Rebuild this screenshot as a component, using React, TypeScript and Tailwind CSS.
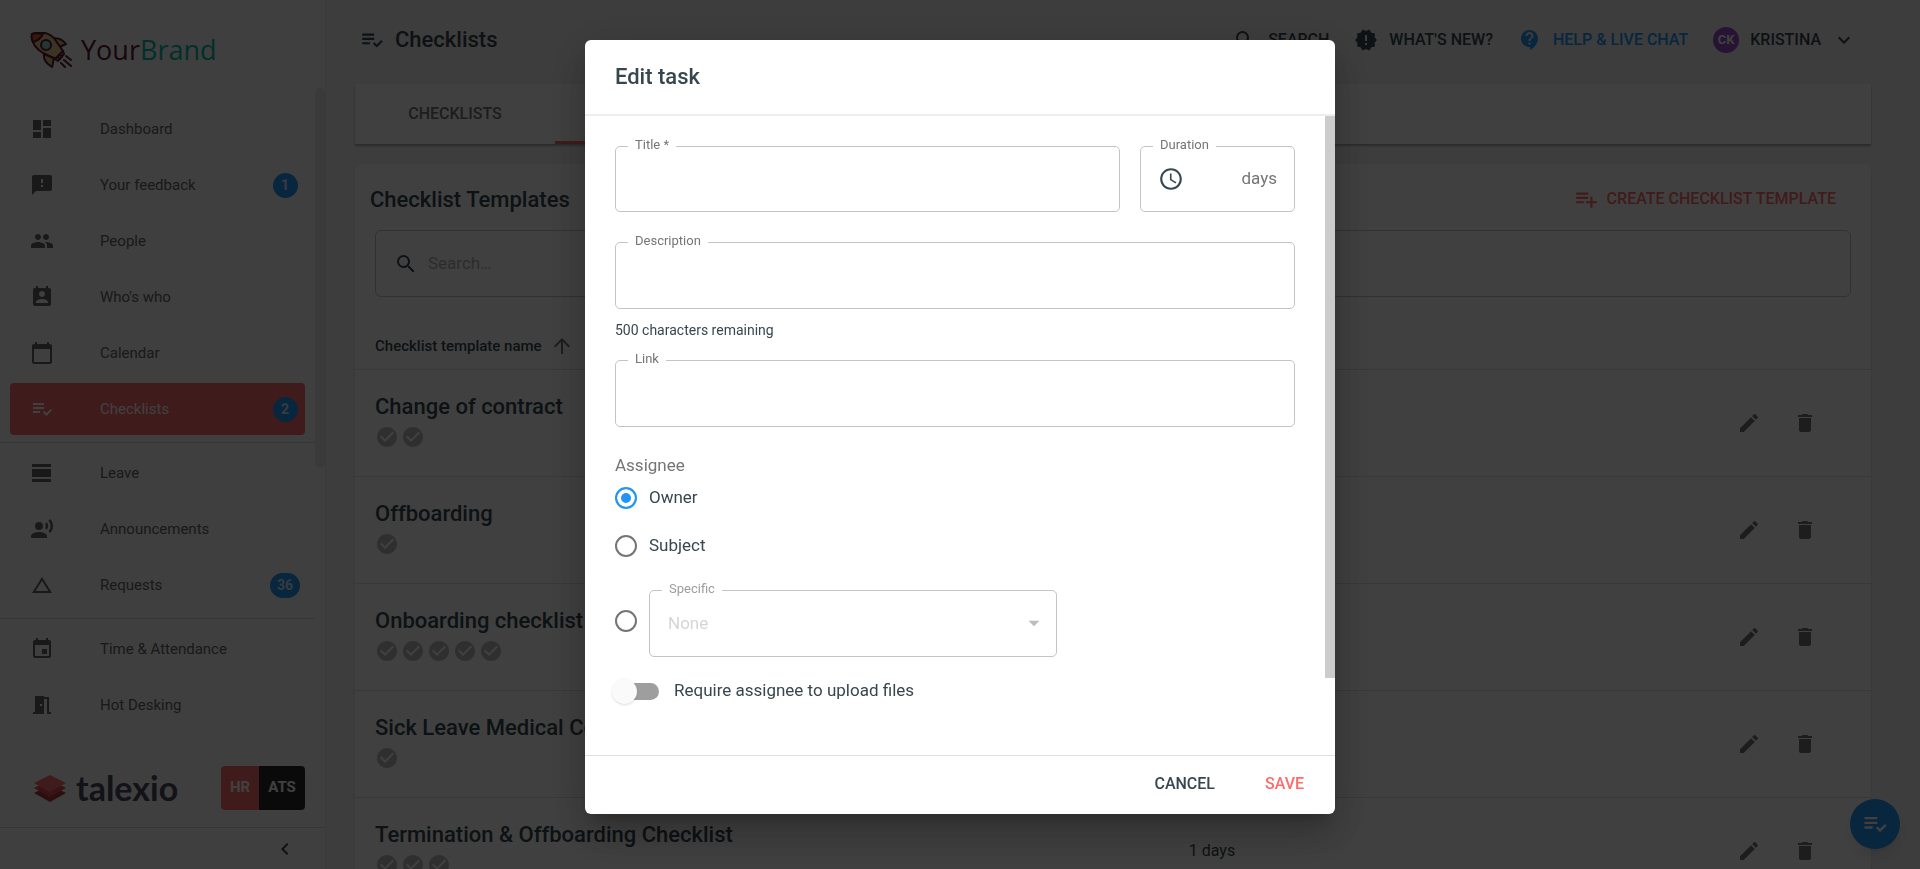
import React, { useState } from 'react';
import clsx from 'clsx';
import type { IconType } from 'react-icons';
import {
  MdAccessTime,
  MdArrowUpward,
  MdArrowDropDown,
  MdCalendarToday,
  MdChangeHistory,
  MdCheckCircle,
  MdContactSupport,
  MdDashboard,
  MdDelete,
  MdEdit,
  MdEvent,
  MdExpandMore,
  MdFeedback,
  MdKeyboardArrowLeft,
  MdMeetingRoom,
  MdNewReleases,
  MdPeople,
  MdPermContactCalendar,
  MdPlaylistAdd,
  MdPlaylistAddCheck,
  MdRecordVoiceOver,
  MdSearch,
  MdViewDay,
} from 'react-icons/md';

interface NavItem {
  label: string;
  icon: IconType;
  badge?: number;
  active?: boolean;
}

const navGroups: NavItem[][] = [
  [
    { label: 'Dashboard', icon: MdDashboard },
    { label: 'Your feedback', icon: MdFeedback, badge: 1 },
    { label: 'People', icon: MdPeople },
    { label: "Who's who", icon: MdPermContactCalendar },
    { label: 'Calendar', icon: MdCalendarToday },
    { label: 'Checklists', icon: MdPlaylistAddCheck, badge: 2, active: true },
  ],
  [
    { label: 'Leave', icon: MdViewDay },
    { label: 'Announcements', icon: MdRecordVoiceOver },
    { label: 'Requests', icon: MdChangeHistory, badge: 36 },
  ],
  [
    { label: 'Time & Attendance', icon: MdEvent },
    { label: 'Hot Desking', icon: MdMeetingRoom },
  ],
];

const templates = [
  { name: 'Change of contract', tasks: 2, duration: '' },
  { name: 'Offboarding', tasks: 1, duration: '' },
  { name: 'Onboarding checklist', tasks: 5, duration: '' },
  { name: 'Sick Leave Medical Certificate', tasks: 1, duration: '' },
  { name: 'Termination & Offboarding Checklist', tasks: 3, duration: '1 days' },
];

const BrandLogo: React.FC = () => (
  <div className="flex items-center gap-[7px]">
    <svg width="44" height="36" viewBox="0 0 44 36" fill="none" stroke="#5c1a33" strokeWidth="2" strokeLinejoin="round" strokeLinecap="round">
      <path d="M21 7c6-2 11 0 15 5l-9 4z" fill="#e3bd80" />
      <path d="M14 22c-1 6 3 10 8 13l2-9z" fill="#e3bd80" />
      <path d="M2 2c9-3 17-1 22 4l9 13-7 8-13-6C5 16 1 9 2 2z" fill="#ecca8c" />
      <path d="M2 2c4-1 7-1 11 0-2 4-6 7-10 8C2 8 1 5 2 2z" fill="#e0601a" />
      <circle cx="16" cy="13" r="5" fill="#8fd3cf" />
      <path d="M33 19l1 3-6 7-3-2zM30 22l2 3M28 25l2 2" fill="#e3bd80" />
      <path d="M36 24l5 4M34 28l7 6M31 31l4 4" />
    </svg>
    <span className="font-['Open_Sans'] text-[27px] leading-9 text-[#5c1a33]">
      Your<span className="text-[#00bfa5]">Brand</span>
    </span>
  </div>
);

const TalexioLogo: React.FC = () => (
  <div className="flex items-center gap-2.5">
    <svg width="32" height="28" viewBox="0 0 32 28">
      <path d="M16 11l16 8-16 9-16-9z" fill="#b03a3f" />
      <path d="M16 6l16 8-16 9-16-9z" fill="#d84e50" />
      <path d="M16 1l16 8-16 9L0 9z" fill="#ff6b6b" />
    </svg>
    <span className="font-[Lato] text-[34px] leading-9 font-bold text-[#474a5e]">talexio</span>
  </div>
);

const Sidebar: React.FC = () => (
  <aside className="flex w-[326px] shrink-0 flex-col border-r border-[#e6e6e6] bg-[#fafafa]">
    <div className="h-[88px] px-[30px] pt-8">
      <BrandLogo />
    </div>
    <div className="flex flex-1">
      <nav className="flex-1 pt-[15px]">
        {navGroups.map((group, i) => (
          <ul key={group[0].label} className={clsx('space-y-1 px-[10px]', i > 0 && 'mt-[7px] border-t border-[#d5d5d5] pt-1')}>
            {group.map(({ label, icon: Icon, badge, active }) => (
              <li key={label}>
                <a
                  href="#"
                  className={clsx(
                    'flex h-[52px] items-center rounded pl-5',
                    active ? 'bg-[#ff6b6b] text-white' : 'text-[#666]'
                  )}
                >
                  <Icon size={24} />
                  <span className="ml-[46px] flex-1 text-[15px]">{label}</span>
                  {badge && (
                    <span className="flex w-10 justify-center">
                      <span className="flex h-[25px] min-w-[25px] items-center justify-center rounded-full bg-[#2196f3] px-[7px] text-sm font-bold text-white/80">
                        {badge}
                      </span>
                    </span>
                  )}
                </a>
              </li>
            ))}
          </ul>
        ))}
      </nav>
      <div className="h-[380px] w-[10px] rounded-full bg-[#e6e6e6]" />
    </div>
    <div className="flex h-[77px] items-center justify-between pr-5 pb-0.5 pl-[34px]">
      <TalexioLogo />
      <div className="flex h-11 overflow-hidden rounded text-[15px] font-bold">
        <button type="button" className="w-[38px] bg-[#ff6b6b] text-white">HR</button>
        <button type="button" className="w-[46px] bg-[#2b2b2b] text-white">ATS</button>
      </div>
    </div>
    <div className="flex h-[42px] items-center justify-end border-t border-[#d5d5d5] pr-7">
      <button type="button" aria-label="Collapse menu" className="text-[#37474f]">
        <MdKeyboardArrowLeft size={24} />
      </button>
    </div>
  </aside>
);

const TopBar: React.FC = () => (
  <header className="flex h-[84px] shrink-0 items-center justify-between pr-[15px] pb-[5px] pl-1 font-medium">
    <h1 className="flex items-center gap-[10px] text-[22px]">
      <MdPlaylistAddCheck size={26} />
      Checklists
    </h1>
    <div className="flex items-center gap-[25px]">
      <button type="button" className="flex items-center gap-[11px]">
        <MdSearch size={24} />
        SEARCH
      </button>
      <button type="button" className="flex items-center gap-[11px]">
        <MdNewReleases size={24} />
        WHAT'S NEW?
      </button>
      <button type="button" className="flex items-center gap-[11px] text-[#2196f3]">
        <MdContactSupport size={24} />
        HELP &amp; LIVE CHAT
      </button>
      <button type="button" className="flex items-center gap-[11px]">
        <span className="flex size-[26px] items-center justify-center rounded-full bg-[#9c4dcc] text-[13px] font-bold text-white">
          CK
        </span>
        KRISTINA
        <MdExpandMore size={24} />
      </button>
    </div>
  </header>
);

const TemplatesCard: React.FC = () => (
  <section className="mt-5 flex-1 rounded-t-md bg-white shadow">
    <div className="flex h-[66px] items-center justify-between pt-1 pr-[35px] pl-[15px]">
      <h2 className="text-[22px] font-medium">Checklist Templates</h2>
      <button type="button" className="flex items-center gap-2 font-medium text-[#ff6b6b]">
        <MdPlaylistAdd size={26} />
        CREATE CHECKLIST TEMPLATE
      </button>
    </div>
    <div className="mx-5 flex h-[67px] items-center gap-[10px] rounded-md border border-[#c4c4c4] px-[18px]">
      <MdSearch size={24} />
      <input
        type="search"
        aria-label="Search templates"
        placeholder="Search…"
        className="flex-1 bg-transparent text-[17px] outline-none placeholder:text-[#b0b0b0]"
      />
    </div>
    <table className="mt-[27px] w-full text-left">
      <thead>
        <tr className="h-[45px] border-b border-[#e0e0e0] text-[15px]">
          <th className="w-[55%] pl-5 font-medium">
            <span className="flex items-center gap-2">
              Checklist template name
              <MdArrowUpward size={24} className="text-[#757575]" />
            </span>
          </th>
          <th />
          <th />
        </tr>
      </thead>
      <tbody>
        {templates.map((template) => (
          <tr key={template.name} className="h-[107px] border-b border-[#e0e0e0]">
            <td className="pb-1 pl-5">
              <h3 className="text-[22px] leading-7 font-medium">{template.name}</h3>
              <div className="mt-1 flex gap-0.5 text-[#bdbdbd]">
                {Array.from({ length: template.tasks }, (_, i) => (
                  <MdCheckCircle key={i} size={24} />
                ))}
              </div>
            </td>
            <td>{template.duration}</td>
            <td className="pr-[54px]">
              <div className="flex justify-end gap-8 text-[#757575]">
                <button type="button" aria-label={`Edit ${template.name}`}>
                  <MdEdit size={24} />
                </button>
                <button type="button" aria-label={`Delete ${template.name}`}>
                  <MdDelete size={24} />
                </button>
              </div>
            </td>
          </tr>
        ))}
      </tbody>
    </table>
  </section>
);

interface OutlinedProps {
  id: string;
  label: string;
  disabled?: boolean;
  className?: string;
  children: React.ReactNode;
}

const Outlined: React.FC<OutlinedProps> = ({ id, label, disabled, className, children }) => (
  <fieldset className={clsx('min-w-0 rounded-[5px] border border-[#c4c4c4]', className)}>
    <legend className={clsx('ml-3 h-3 px-[7px] text-[13px] leading-[10px]', disabled ? 'text-[#9e9e9e]' : 'text-[#757575]')}>
      <label htmlFor={id}>{label}</label>
    </legend>
    <div className="flex h-[54px] items-center px-[17px]">{children}</div>
  </fieldset>
);

const radioStyle =
  'size-[22px] shrink-0 appearance-none rounded-full border-2 border-[#757575] checked:border-[#2196f3] checked:bg-[#2196f3] checked:shadow-[inset_0_0_0_4px_#fff]';

const inputStyle = 'h-full w-full min-w-0 bg-transparent text-[17px] outline-none';

const EditTaskDialog: React.FC = () => {
  const [assignee, setAssignee] = useState('owner');
  const [upload, setUpload] = useState(false);

  return (
    <div className="fixed inset-0 flex items-start justify-center bg-black/75 pt-10">
      <div
        role="dialog"
        aria-labelledby="dialog-title"
        className="w-[750px] max-w-full rounded-md bg-white shadow-[0_11px_15px_-7px_rgba(0,0,0,0.2),0_24px_38px_3px_rgba(0,0,0,0.14),0_9px_46px_8px_rgba(0,0,0,0.12)]"
      >
        <h2 id="dialog-title" className="flex h-[76px] items-center border-b-2 border-[#eee] px-[30px] pb-0.5 text-[22px] font-medium">
          Edit task
        </h2>
        <div className="flex">
          <form className="flex-1 pt-6 pr-[30px] pb-[45px] pl-[30px] text-[17px]">
            <div className="flex gap-5">
              <Outlined id="title" label="Title *" className="h-[72px] flex-1">
                <input id="title" type="text" required className={inputStyle} />
              </Outlined>
              <Outlined id="duration" label="Duration" className="h-[72px] w-[155px]">
                <MdAccessTime size={26} className="shrink-0" />
                <input id="duration" type="text" className={inputStyle} />
                <span className="text-[#757575]">days</span>
              </Outlined>
            </div>
            <Outlined id="description" label="Description" className="mt-6 h-[73px]">
              <input id="description" type="text" maxLength={500} className={inputStyle} />
            </Outlined>
            <p className="mt-[11px] text-sm leading-5">500 characters remaining</p>
            <Outlined id="link" label="Link" className="mt-[14px] h-[73px]">
              <input id="link" type="text" className={inputStyle} />
            </Outlined>
            <p className="mt-[30px] mb-px leading-4 text-[#757575]">Assignee</p>
            <label className="flex h-12 items-center gap-3">
              <input type="radio" name="assignee" className={radioStyle} checked={assignee === 'owner'} onChange={() => setAssignee('owner')} />
              Owner
            </label>
            <label className="flex h-12 items-center gap-3">
              <input type="radio" name="assignee" className={radioStyle} checked={assignee === 'subject'} onChange={() => setAssignee('subject')} />
              Subject
            </label>
            <div className="mt-[14px] flex items-center gap-3">
              <input
                type="radio"
                name="assignee"
                aria-label="Specific"
                className={radioStyle}
                checked={assignee === 'specific'}
                onChange={() => setAssignee('specific')}
              />
              <Outlined id="specific" label="Specific" disabled className="h-[73px] w-[408px]">
                <select id="specific" disabled={assignee !== 'specific'} className="flex-1 appearance-none bg-transparent px-px pt-0.5 text-[#d5d5d5]">
                  <option>None</option>
                </select>
                <MdArrowDropDown size={26} className="-mr-2 text-[#bdbdbd]" />
              </Outlined>
            </div>
            <label className="mt-[14px] mb-[-1px] flex h-10 items-center gap-[15px]">
              <input
                type="checkbox"
                checked={upload}
                onChange={(e) => setUpload(e.target.checked)}
                className="flex h-[17px] w-11 appearance-none items-center rounded-full bg-[#9e9e9e] before:-ml-[3px] before:size-[25px] before:rounded-full before:bg-[#fafafa] before:shadow checked:justify-end"
              />
              Require assignee to upload files
            </label>
          </form>
          <div className="w-[10px]">
            <div className="h-[88%] bg-[#ccc]" />
          </div>
        </div>
        <div className="flex h-[59px] items-center justify-end gap-[50px] border-t border-[#e0e0e0] px-[31px] pb-0.5 font-medium">
          <button type="button">CANCEL</button>
          <button type="button" className="text-[#ff6b6b]">SAVE</button>
        </div>
      </div>
    </div>
  );
};

const App: React.FC = () => (
  <div className="font-[Roboto,sans-serif] text-base text-[#37474f]">
    <div className="flex h-screen overflow-hidden bg-[#f2f2f2]">
      <Sidebar />
      <main className="flex flex-1 flex-col pr-[49px] pl-[29px]">
        <TopBar />
        <div className="flex h-[60px] shrink-0 bg-white font-medium text-[#757575] shadow-[0_2px_2px_rgba(0,0,0,0.3)]">
          <button type="button" className="w-[200px]">CHECKLISTS</button>
          <button type="button" className="w-[200px] border-b-3 border-[#ff6b6b] pt-[3px]">TEMPLATES</button>
        </div>
        <TemplatesCard />
      </main>
      <button
        type="button"
        aria-label="My checklists"
        className="fixed right-5 bottom-5 flex size-[50px] items-center justify-center rounded-full bg-[#2196f3] text-white shadow-lg"
      >
        <MdPlaylistAddCheck size={28} />
      </button>
    </div>
    <EditTaskDialog />
  </div>
);

export default App;
